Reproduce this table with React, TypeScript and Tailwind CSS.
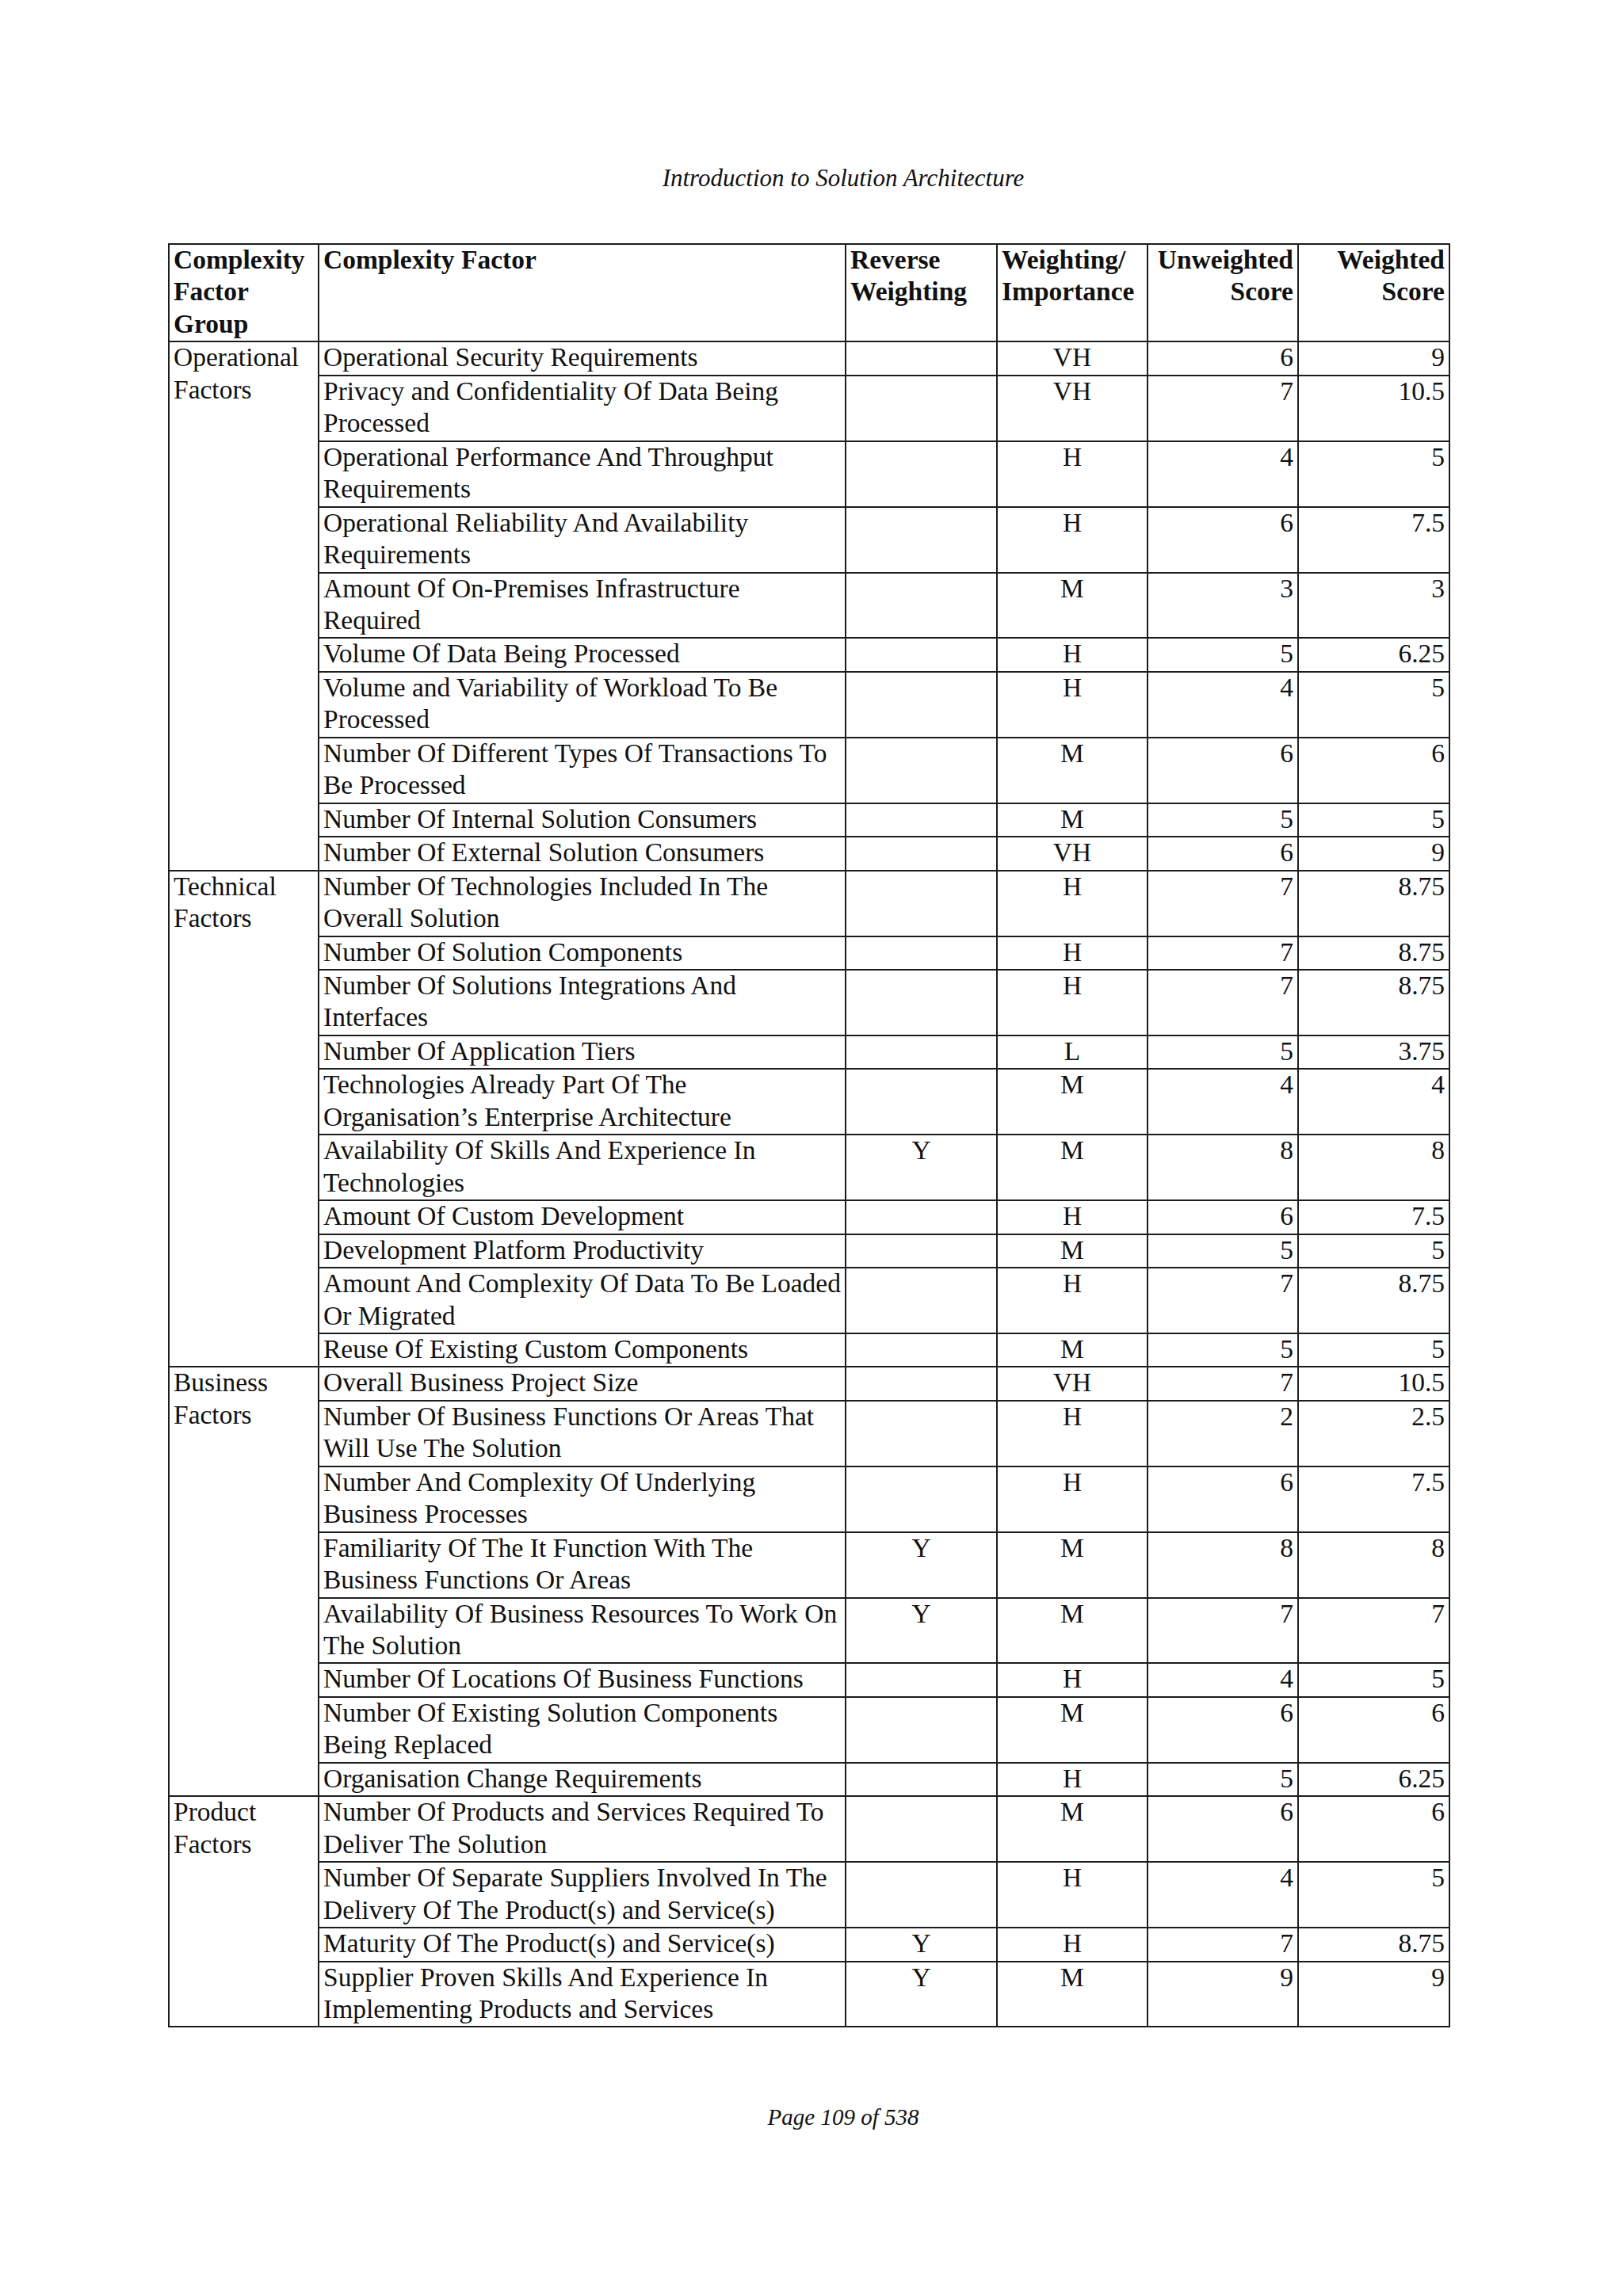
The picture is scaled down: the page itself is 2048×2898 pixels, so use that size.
import React from "react";

type Row = [string[], string, string, string, string];
type Group = { name: string[]; rows: Row[] };

const groups: Group[] = [
  {
    name: ["Operational", "Factors"],
    rows: [
      [["Operational Security Requirements"], "", "VH", "6", "9"],
      [["Privacy and Confidentiality Of Data Being", "Processed"], "", "VH", "7", "10.5"],
      [["Operational Performance And Throughput", "Requirements"], "", "H", "4", "5"],
      [["Operational Reliability And Availability", "Requirements"], "", "H", "6", "7.5"],
      [["Amount Of On-Premises Infrastructure", "Required"], "", "M", "3", "3"],
      [["Volume Of Data Being Processed"], "", "H", "5", "6.25"],
      [["Volume and Variability of Workload To Be", "Processed"], "", "H", "4", "5"],
      [["Number Of Different Types Of Transactions To", "Be Processed"], "", "M", "6", "6"],
      [["Number Of Internal Solution Consumers"], "", "M", "5", "5"],
      [["Number Of External Solution Consumers"], "", "VH", "6", "9"],
    ],
  },
  {
    name: ["Technical", "Factors"],
    rows: [
      [["Number Of Technologies Included In The", "Overall Solution"], "", "H", "7", "8.75"],
      [["Number Of Solution Components"], "", "H", "7", "8.75"],
      [["Number Of Solutions Integrations And", "Interfaces"], "", "H", "7", "8.75"],
      [["Number Of Application Tiers"], "", "L", "5", "3.75"],
      [["Technologies Already Part Of The", "Organisation\u2019s Enterprise Architecture"], "", "M", "4", "4"],
      [["Availability Of Skills And Experience In", "Technologies"], "Y", "M", "8", "8"],
      [["Amount Of Custom Development"], "", "H", "6", "7.5"],
      [["Development Platform Productivity"], "", "M", "5", "5"],
      [["Amount And Complexity Of Data To Be Loaded", "Or Migrated"], "", "H", "7", "8.75"],
      [["Reuse Of Existing Custom Components"], "", "M", "5", "5"],
    ],
  },
  {
    name: ["Business", "Factors"],
    rows: [
      [["Overall Business Project Size"], "", "VH", "7", "10.5"],
      [["Number Of Business Functions Or Areas That", "Will Use The Solution"], "", "H", "2", "2.5"],
      [["Number And Complexity Of Underlying", "Business Processes"], "", "H", "6", "7.5"],
      [["Familiarity Of The It Function With The", "Business Functions Or Areas"], "Y", "M", "8", "8"],
      [["Availability Of Business Resources To Work On", "The Solution"], "Y", "M", "7", "7"],
      [["Number Of Locations Of Business Functions"], "", "H", "4", "5"],
      [["Number Of Existing Solution Components", "Being Replaced"], "", "M", "6", "6"],
      [["Organisation Change Requirements"], "", "H", "5", "6.25"],
    ],
  },
  {
    name: ["Product", "Factors"],
    rows: [
      [["Number Of Products and Services Required To", "Deliver The Solution"], "", "M", "6", "6"],
      [["Number Of Separate Suppliers Involved In The", "Delivery Of The Product(s) and Service(s)"], "", "H", "4", "5"],
      [["Maturity Of The Product(s) and Service(s)"], "Y", "H", "7", "8.75"],
      [["Supplier Proven Skills And Experience In", "Implementing Products and Services"], "Y", "M", "9", "9"],
    ],
  },
];

const cell = "border-2 border-[#1c1c1c] align-top px-[5px] py-0";

function Lines({ lines }: { lines: string[] }) {
  return (
    <div className="-mt-[1px] mb-[1px]">
      {lines.map((l, i) => (
        <div key={i} className="whitespace-nowrap">
          {l}
        </div>
      ))}
    </div>
  );
}

export default function App() {
  return (
    <div className="w-[2048px] h-[2898px] bg-white flex flex-col font-['Liberation_Serif',serif] text-[#111]">
      <div className="pt-[207px] pl-[80px] text-center italic text-[31px] leading-[36px]">
        Introduction to Solution Architecture
      </div>
      <div className="mt-[64px] pl-[212px]">
        <table className="table-fixed border-collapse w-[1616px] text-[33.5px] leading-[40.45px]">
          <colgroup>
            <col className="w-[189px]" />
            <col className="w-[665px]" />
            <col className="w-[191px]" />
            <col className="w-[190px]" />
            <col className="w-[190px]" />
            <col className="w-[191px]" />
          </colgroup>
          <thead>
            <tr>
              <th className={`${cell} text-left font-bold`}>
                <Lines lines={["Complexity", "Factor", "Group"]} />
              </th>
              <th className={`${cell} text-left font-bold`}>
                <Lines lines={["Complexity Factor"]} />
              </th>
              <th className={`${cell} text-left font-bold`}>
                <Lines lines={["Reverse", "Weighting"]} />
              </th>
              <th className={`${cell} text-left font-bold`}>
                <Lines lines={["Weighting/", "Importance"]} />
              </th>
              <th className={`${cell} text-right font-bold`}>
                <Lines lines={["Unweighted", "Score"]} />
              </th>
              <th className={`${cell} text-right font-bold`}>
                <Lines lines={["Weighted", "Score"]} />
              </th>
            </tr>
          </thead>
          <tbody>
            {groups.map((g) =>
              g.rows.map((r, i) => (
                <tr key={g.name[0] + i}>
                  {i === 0 && (
                    <td className={`${cell} text-left`} rowSpan={g.rows.length}>
                      <Lines lines={g.name} />
                    </td>
                  )}
                  <td className={`${cell} text-left`}>
                    <Lines lines={r[0]} />
                  </td>
                  <td className={`${cell} text-center`}>
                    <Lines lines={[r[1] || "\u00a0"]} />
                  </td>
                  <td className={`${cell} text-center`}>
                    <Lines lines={[r[2]]} />
                  </td>
                  <td className={`${cell} text-right`}>
                    <Lines lines={[r[3]]} />
                  </td>
                  <td className={`${cell} text-right`}>
                    <Lines lines={[r[4]]} />
                  </td>
                </tr>
              ))
            )}
          </tbody>
        </table>
      </div>
      <div className="mt-auto pb-[208px] pl-[80px] text-center italic text-[29px] leading-[36px]">
        Page 109 of 538
      </div>
    </div>
  );
}
